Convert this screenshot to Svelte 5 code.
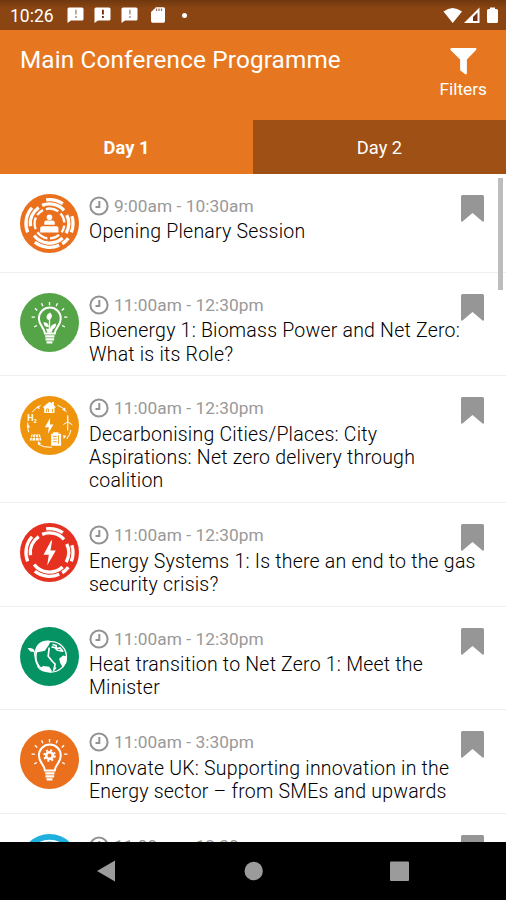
<script lang="ts">
  type Kind = 'plenary' | 'plant' | 'city' | 'energy' | 'globe' | 'innovate' | 'next';
  interface Session {
    kind: Kind;
    color: string;
    time: string;
    lines: string[];
  }

  const sessions: Session[] = [
    { kind: 'plenary', color: '#ea701e', time: '9:00am - 10:30am', lines: ['Opening Plenary Session'] },
    { kind: 'plant', color: '#55a447', time: '11:00am - 12:30pm', lines: ['Bioenergy 1: Biomass Power and Net Zero:', 'What is its Role?'] },
    { kind: 'city', color: '#ef950d', time: '11:00am - 12:30pm', lines: ['Decarbonising Cities/Places: City', 'Aspirations: Net zero delivery through', 'coalition'] },
    { kind: 'energy', color: '#e63120', time: '11:00am - 12:30pm', lines: ['Energy Systems 1: Is there an end to the gas', 'security crisis?'] },
    { kind: 'globe', color: '#069364', time: '11:00am - 12:30pm', lines: ['Heat transition to Net Zero 1: Meet the', 'Minister'] },
    { kind: 'innovate', color: '#ea701e', time: '11:00am - 3:30pm', lines: ['Innovate UK: Supporting innovation in the', 'Energy sector – from SMEs and upwards'] },
    { kind: 'next', color: '#1fb0de', time: '11:00am - 12:30pm', lines: [] },
  ];

  let day = $state(1);

  // radius, start and end angle (clockwise degrees from 3 o'clock)
  const segments = [
    [71, 158, 222],
    [58, 172, 236],
    [72, 262, 304],
    [59, 248, 318],
    [71, 342, 382],
    [58, 334, 390],
    [59, 48, 142],
    [72, 38, 58],
    [72, 66, 128],
  ];

  const innerSegments = [
    [45, 158, 204],
    [45, 214, 244],
    [45, 256, 306],
    [45, 318, 356],
    [45, 8, 36],
    [45, 50, 88],
    [45, 98, 144],
  ];

  function arc(r: number, from: number, to: number) {
    const p = (a: number) => {
      const t = (a * Math.PI) / 180;
      return `${(89 + r * Math.cos(t)).toFixed(1)} ${(89 + r * Math.sin(t)).toFixed(1)}`;
    };
    return `M${p(from)}A${r} ${r} 0 0 1 ${p(to)}`;
  }
</script>

{#snippet ring()}
  {#each segments as [r, from, to]}
    <path d={arc(r, from, to)} fill="none" stroke="#fff" stroke-width="10" />
  {/each}
{/snippet}

{#snippet bulb()}
  <g fill="none" stroke="#fff" stroke-width="6">
    <path d="M75 122C74 104 57 99 57 77a33 33 0 0 1 66 0c0 22-17 27-18 45z" />
    <path d="M76 131h28M77 140h26M80 149h18" stroke-width="7" />
    <path d="M89 27v10M65 31l4 9M113 31l-4 9M45 46l7 7M133 46l-7 7M35 73h10M143 73h-10M43 102l8-4M135 102l-8-4" stroke-width="4" />
  </g>
{/snippet}

{#snippet badge(kind: Kind, color: string)}
  <svg class="badge" viewBox="0 0 178 178" aria-hidden="true">
    <circle cx="89" cy="89" r="89" fill={color} />
    {#if kind === 'plenary'}
      {@render ring()}
      {#each innerSegments as [r, from, to]}
        <path d={arc(r, from, to)} fill="none" stroke="#fff" stroke-width="7" />
      {/each}
      <circle cx="89" cy="92" r="37" fill={color} />
      <g fill="#fff">
        <circle cx="89" cy="70" r="8.500" />
        <path d="M73 93v-6q0-7 7-7h18q7 0 7 7v6zM66 97h46l4 4v15H61v-15z" />
      </g>
    {:else if kind === 'plant'}
      {@render bulb()}
      <path d="M89 120V76" stroke="#fff" stroke-width="4" />
      <path d="M88 82q-14-6-4-19l7-4q12 13-3 23zM87 103q-16 0-16-15 16 0 16 15zM91 111q0-17 18-19 0 18-18 19zM78 108h22l-5 11H83z" fill="#fff" />
    {:else if kind === 'city'}
      <g fill="none" stroke="#fff" stroke-width="3">
        <path d={arc(66, 218, 246)} />
        <path d={arc(66, 292, 322)} />
        <path d={arc(66, 12, 38)} />
        <path d={arc(66, 84, 122)} />
        <path d={arc(66, 162, 188)} />
        <path d="M144 62v42M144 78l-13 8M144 78l14 9M144 78V58" />
      </g>
      <g fill="#fff">
        <path d="M68 35l21-18 7 6v-5h6v10l7 7h-5v16H73V35zM94 114h6v-5h16v5h8v36H94z" />
        <path d="M35 116h25l5 18H29zM57 29l2 11-10-5zM137 35l-1 12-9-7zM132 130l-2-12 10 3zM64 144l-10-8v11zM24 86l7 8-10 2z" />
        <path d="M91 66 75 94h12l-3 20 17-28H90z" />
      </g>
      <path d="M80 49V39h6v10M98 49V39M99 122h12M99 130h12M99 138h12M116 118v27M30 125h32M39 116l-3 18M47 116v18M55 116l3 18" fill="none" stroke={color} stroke-width="2.5" />
      <text x="22" y="76" class="symbol">H</text>
      <text x="41" y="81" class="symbol sub">2</text>
    {:else if kind === 'energy'}
      {@render ring()}
      <path d="M94 53 71 96h16l-5 32 26-45H92l5-30z" fill="#fff" />
    {:else if kind === 'globe'}
      <circle cx="94" cy="90" r="46" fill="none" stroke="#fff" stroke-width="4" />
      <g fill="#fff">
        <path d="M45 75c2-24 23-38 47-33l-5 12-12 18-14 3-14 1zM48 78l-9-3c-9 0-12-5-16-12 9 0 14 0 19 5l2 5z" />
        <path d="M56 126l14-8 18 2 8 12-3 5c-18 0-29-4-37-11z" />
        <path d="M118 96l12-10 11 3-1 18-10 16-8-13z" />
      </g>
      <path
        d="M44 76l4 26 9 22M88 62l-3 26 13 16 8 8-4 18M98 53l11 3 1 9 11-2 8 10-16-3-8-8-10-2M108 122l-8 10"
        fill="none"
        stroke="#fff"
        stroke-width="5"
        stroke-linejoin="round"
      />
    {:else if kind === 'innovate'}
      {@render bulb()}
      <circle cx="89" cy="77" r="10" fill="none" stroke="#fff" stroke-width="8" />
      <circle cx="89" cy="77" r="16" fill="none" stroke="#fff" stroke-width="6" stroke-dasharray="6.28 6.28" />
    {:else}
      <path d={arc(69, 205, 335)} fill="none" stroke="#fff" stroke-width="5" />
      <path d="M61 28h18M85 28h32" stroke="#0d6786" stroke-width="4" />
    {/if}
  </svg>
{/snippet}

{#snippet alertIcon(faint: boolean)}
  <svg class="alert" viewBox="0 0 17 17" aria-hidden="true">
    <path d="M2 .5h13a1.500 1.500 0 0 1 1.500 1.500v10a1.500 1.500 0 0 1-1.500 1.500H4L.5 16V2A1.500 1.500 0 0 1 2 .5z" fill="#fff" />
    <path d="M8.900 2.800v4.700M8.900 9v2" stroke={faint ? '#b7a39b' : '#75210c'} stroke-width="1.800" />
  </svg>
{/snippet}

<div class="screen">
  <div class="status">
    <span class="clock">10:26</span>
    <div class="notices">
      {@render alertIcon(true)}
      {@render alertIcon(false)}
      {@render alertIcon(true)}
      <svg class="sd" viewBox="0 0 14 16" aria-hidden="true">
        <path d="M5 .3h7.5Q14 .3 14 2v12q0 1.700-1.500 1.700h-11Q0 15.700 0 14V5z" fill="#fff" />
        <path d="M5.500 1.500v2.500M8 1.500v2.500M10.500 1.500v2.500" stroke="#9a7460" stroke-width="1.300" />
      </svg>
      <span class="dot"></span>
    </div>
    <svg class="signals" viewBox="0 0 57 18" aria-hidden="true">
      <path d="M.5 4.500Q9.500-2.500 19 4.500L9.700 16z" fill="#fff" />
      <path d="M36.500.5V16H21z" fill="#fff" />
      <path d="M34.500 5.500V14H30v-4z" fill="#7a2c14" />
      <path d="M47 2V.5h5V2h1.500Q55 2 55 3.500v11q0 1.500-1.500 1.500h-8Q44 16 44 14.500v-11Q44 2 45.500 2z" fill="#fff" />
    </svg>
  </div>

  <header>
    <h1>Main Conference Programme</h1>
    <button type="button" class="filters">
      <svg viewBox="0 0 28 28" aria-hidden="true">
        <path d="M1 0h26q1 1 0 2L17.500 12v14.500q-.5 1.500-2 .5l-5-4V12L.5 2Q0 1 1 0z" fill="#fff" />
      </svg>
      <span>Filters</span>
    </button>
  </header>

  <nav class="tabs">
    <button type="button" class:active={day === 1} onclick={() => (day = 1)}>Day 1</button>
    <button type="button" class:active={day === 2} onclick={() => (day = 2)}>Day 2</button>
  </nav>

  <main>
    {#each sessions as session}
      <article>
        {@render badge(session.kind, session.color)}
        <div class="info">
          <div class="time">
            <svg viewBox="0 0 20 20" aria-hidden="true">
              <circle cx="10" cy="10" r="8.600" />
              <path d="M10.300 5v6H6.500" />
            </svg>
            <span>{session.time}</span>
          </div>
          <h2>
            {#each session.lines as line}
              <span>{line}</span>
            {/each}
          </h2>
        </div>
        <svg class="bookmark" viewBox="0 0 23 27" aria-hidden="true">
          <path d="M1.500 0h20Q23 0 23 1.500V26q-.5 1-1.500.5L11.500 18 1.500 26.500Q.5 27 0 26V1.500Q0 0 1.500 0z" />
        </svg>
      </article>
    {/each}
    <div class="scrollbar"></div>
  </main>

  <div class="system">
    <svg viewBox="0 0 506 58" aria-hidden="true">
      <path d="M97 29 115 18.500v21z" />
      <circle cx="253.700" cy="29" r="9.200" />
      <rect x="390" y="19.500" width="19" height="19.500" rx="1" />
    </svg>
  </div>
</div>

<style>
  :global(body) {
    margin: 0;
    background: #000;
  }

  .screen {
    display: flex;
    flex-direction: column;
    width: 506px;
    height: 900px;
    overflow: hidden;
    font-family: Roboto, 'Liberation Sans', sans-serif;
    background: #fff;
  }

  button {
    margin: 0;
    padding: 0;
    border: 0;
    background: none;
    color: inherit;
    font: inherit;
  }

  svg {
    display: block;
  }

  .status {
    flex: none;
    display: flex;
    align-items: center;
    box-sizing: border-box;
    height: 30px;
    padding: 0 4px 0 10px;
    color: #fff;
    background: linear-gradient(#6f380f, #8a4512 8px);
  }

  .clock {
    width: 57px;
    font-size: 17.5px;
    line-height: 20px;
    padding-top: 2px;
  }

  .notices {
    flex: 1;
    display: flex;
    align-items: center;
  }

  .alert {
    width: 17px;
    height: 17px;
    margin: 1px 10px 0 0;
  }

  .sd {
    width: 14px;
    height: 16px;
    margin-left: 3px;
  }

  .dot {
    width: 5px;
    height: 5px;
    margin-left: 17px;
    border-radius: 50%;
    background: #fff;
  }

  .signals {
    width: 57px;
    height: 18px;
    margin: 2px 2px 0 0;
  }

  header {
    flex: none;
    display: flex;
    justify-content: space-between;
    box-sizing: border-box;
    height: 90px;
    padding: 15px 19px 0 20px;
    color: #fff;
    background: #e67720;
  }

  h1 {
    margin: 0;
    font-size: 24.3px;
    font-weight: 400;
    line-height: 30px;
    letter-spacing: 0.15px;
    white-space: nowrap;
  }

  .filters {
    display: flex;
    flex-direction: column;
    align-items: center;
    align-self: flex-start;
    padding-top: 3px;
    font-size: 17.3px;
    line-height: 22px;
  }

  .filters svg {
    width: 27px;
    height: 27px;
    margin-bottom: 3px;
  }

  .tabs {
    flex: none;
    display: flex;
    height: 54px;
  }

  .tabs button {
    flex: 1;
    padding-top: 1px;
    font-size: 18.3px;
    color: #fff;
    background: #9f5115;
  }

  .tabs button.active {
    font-weight: 700;
    background: #e67720;
  }

  main {
    position: relative;
    flex: 1;
    min-height: 0;
    overflow: hidden;
  }

  article {
    display: flex;
    box-sizing: border-box;
    min-height: 99px;
    padding: 20px 22px 9.6px 20px;
    border-bottom: 1px solid #efefef;
  }

  .badge {
    flex: none;
    width: 59px;
    height: 59px;
  }

  .symbol {
    fill: #fff;
    font-size: 27px;
    font-weight: 700;
  }

  .symbol.sub {
    font-size: 18px;
  }

  .info {
    flex: 1;
    min-width: 0;
    margin-left: 10px;
  }

  .time {
    display: flex;
    align-items: center;
    height: 24px;
    color: #999;
    font-size: 17.3px;
    line-height: 24px;
    letter-spacing: 0.05px;
    white-space: nowrap;
  }

  .time svg {
    width: 20px;
    height: 20px;
    margin-right: 5px;
    fill: none;
    stroke: #929292;
    stroke-width: 2;
  }

  h2 {
    margin: 2.3px 0 0;
    color: #000;
    font-size: 19.5px;
    font-weight: 300;
    line-height: 23.3px;
    letter-spacing: 0.22px;
  }

  h2 span {
    display: block;
    white-space: nowrap;
  }

  .bookmark {
    flex: none;
    width: 23px;
    height: 27px;
    margin-top: 1px;
    fill: #969696;
  }

  .scrollbar {
    position: absolute;
    top: 4px;
    right: 3px;
    width: 5px;
    height: 112px;
    background: #bdbdbd;
  }

  .system {
    flex: none;
    height: 58px;
    background: #000;
  }

  .system svg {
    width: 506px;
    height: 58px;
    fill: #9b9b9b;
  }
</style>
